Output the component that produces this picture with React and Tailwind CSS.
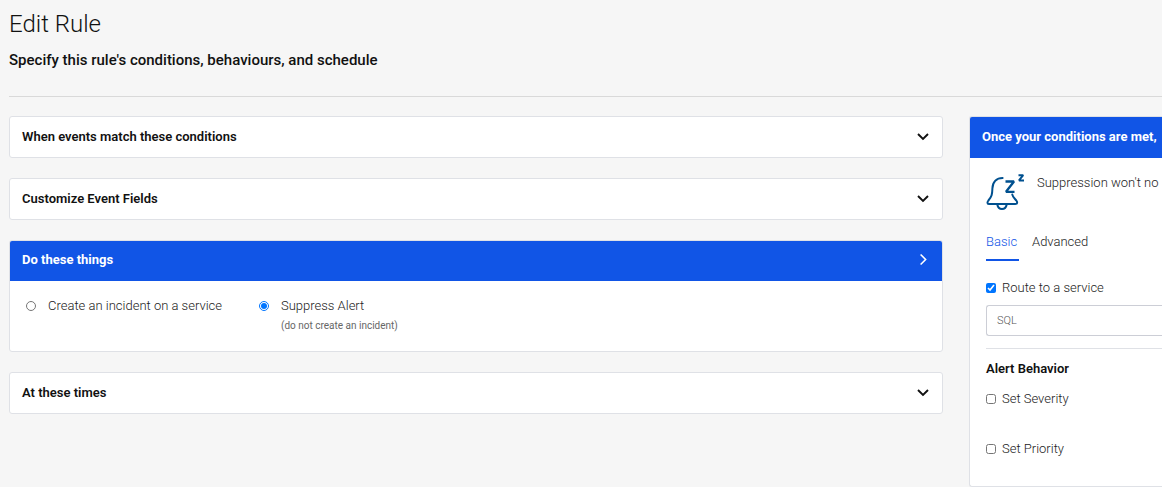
import React, { useState } from 'react';

function Chevron({ open }) {
  return (
    <svg
      viewBox="0 0 14 14"
      className="w-3.5 h-3.5 shrink-0"
      fill="none"
      stroke="currentColor"
      strokeWidth={open ? 1.6 : 1.9}
      aria-hidden="true"
    >
      {open ? <path d="M4.600 1.500l5 5-5 5" /> : <path d="M2 4l5 5 5-5" />}
    </svg>
  );
}

function SnoozeBell() {
  return (
    <svg
      viewBox="0 0 40 38"
      className="w-10 h-[38px] shrink-0"
      fill="none"
      stroke="#00508f"
      strokeWidth="2"
      strokeLinejoin="round"
      strokeLinecap="round"
      aria-hidden="true"
    >
      <path d="M16.600 5C10.500 5 6.700 9 6.400 15.500C6.200 21.500 5.800 23.500 2.400 27.500C1 29.300 1.200 31 3.300 31H29.300C31.300 31 31.700 29.300 30.300 27.500C28.200 25 26.600 23.500 26.300 21.600" />
      <path d="M11.300 31.500C11.800 34.300 13.500 36 16 36C18.500 36 20.200 34.300 20.700 31.500" />
      <path d="M19.500 8.500H28L20 18.800H28.500" strokeWidth="2.300" strokeLinecap="butt" strokeLinejoin="bevel" />
      <path d="M32.500 2.200H37.200L33 7.400H38" strokeWidth="2" strokeLinecap="butt" strokeLinejoin="bevel" />
    </svg>
  );
}

function Section({ title, open = false, children }) {
  return (
    <section className="bg-white border border-[#dfe1e6] rounded-[3px] overflow-hidden">
      <button
        type="button"
        aria-expanded={open}
        className={`flex w-full h-10 items-center justify-between px-3 text-left text-[13px] ${
          open ? 'bg-[#1155e6] pb-0.5 text-white font-bold' : 'text-[#111] font-semibold'
        }`}
      >
        <span>{title}</span>
        <Chevron open={open} />
      </button>
      {children}
    </section>
  );
}

function CheckRow({ label, checked, onChange }) {
  return (
    <label className="flex items-center gap-1.5 h-5">
      <input type="checkbox" checked={checked} onChange={onChange} className="w-[10px] h-[10px] accent-[#0075ff]" />
      <span>{label}</span>
    </label>
  );
}

export default function App() {
  const [action, setAction] = useState('suppress');
  const [route, setRoute] = useState(true);
  const [severity, setSeverity] = useState(false);
  const [priority, setPriority] = useState(false);

  return (
    <main className="min-h-screen overflow-hidden bg-[#f6f6f6] pl-[9px] font-['Roboto','Liberation_Sans',sans-serif] text-[13px] leading-5 font-light text-[#222]">
      <header className="border-b border-[#d9d9d9] pt-2 pb-[26px]">
        <h1 className="text-2xl leading-8 font-light text-[#111]">Edit Rule</h1>
        <h2 className="mt-2.5 text-[15px] leading-5 font-medium text-[#111]">
          Specify this rule's conditions, behaviours, and schedule
        </h2>
      </header>

      <div className="mt-[19px] flex items-start gap-[26px]">
        <div className="flex min-w-0 flex-1 flex-col gap-5">
          <Section title="When events match these conditions" />
          <Section title="Customize Event Fields" />
          <Section title="Do these things" open>
            <div className="flex items-start px-4 pt-[15px] pb-[15px]">
              <label className="flex w-[233px] items-center gap-3">
                <input
                  type="radio"
                  name="action"
                  checked={action === 'incident'}
                  onChange={() => setAction('incident')}
                  className="w-[10px] h-[10px] accent-[#0075ff]"
                />
                <span>Create an incident on a service</span>
              </label>
              <label className="flex items-start gap-3">
                <input
                  type="radio"
                  name="action"
                  checked={action === 'suppress'}
                  onChange={() => setAction('suppress')}
                  className="mt-[5px] w-[10px] h-[10px] accent-[#0075ff]"
                />
                <span>
                  Suppress Alert
                  <small className="block text-[10px] leading-5 font-normal text-[#666]">(do not create an incident)</small>
                </span>
              </label>
            </div>
          </Section>
          <Section title="At these times" />
        </div>

        <aside className="w-[193px] shrink-0 overflow-hidden whitespace-nowrap rounded-l-[3px] border border-r-0 border-[#dfe1e6] bg-white">
          <h3 className="flex h-[41px] items-center bg-[#1155e6] pl-3 pb-px font-bold text-white">Once your conditions are met,</h3>
          <div className="pl-4">
            <div className="flex gap-[11px] pt-[15px]">
              <SnoozeBell />
              <p>Suppression won't no</p>
            </div>
            <div role="tablist" className="mt-5 flex gap-[13px]">
              <button
                type="button"
                role="tab"
                aria-selected="true"
                className="h-[30px] w-[33px] border-b-2 border-[#1155e6] pb-1.5 text-left text-[#1155e6]"
              >
                Basic
              </button>
              <button type="button" role="tab" aria-selected="false" className="h-[30px] border-b-2 border-transparent pb-1.5">
                Advanced
              </button>
            </div>
            <div className="mt-[17px]">
              <CheckRow label="Route to a service" checked={route} onChange={() => setRoute(!route)} />
            </div>
            <input
              type="text"
              aria-label="Service"
              defaultValue="SQL"
              className="mt-[7px] block h-[31px] w-full rounded-l-[3px] border border-r-0 border-[#ccced6] bg-white px-2.5 text-[11px] text-[#555]"
            />
            <hr className="mt-3 border-[#dfe1e6]" />
            <h4 className="mt-2.5 font-semibold text-[#111]">Alert Behavior</h4>
            <div className="mt-2.5 mb-[27px] flex flex-col gap-[30px]">
              <CheckRow label="Set Severity" checked={severity} onChange={() => setSeverity(!severity)} />
              <CheckRow label="Set Priority" checked={priority} onChange={() => setPriority(!priority)} />
            </div>
          </div>
        </aside>
      </div>
    </main>
  );
}
